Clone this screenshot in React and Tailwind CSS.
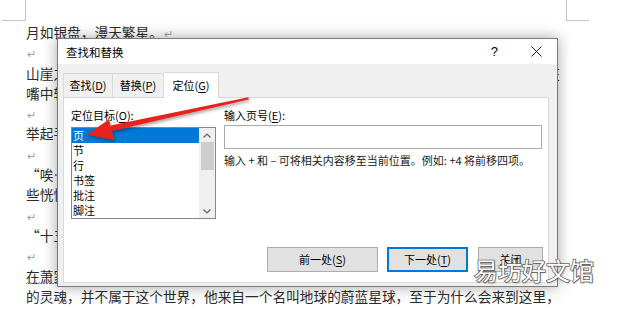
import React from 'react';

const Ret = () => <span className="ml-[1px] text-[11px] text-[#a0a0a0]">↵</span>;

const Line = ({ children }) => (
  <div className="h-[20.3px] whitespace-nowrap leading-[20.3px]">{children}</div>
);

const Key = ({ children }) => <span className="underline underline-offset-[2px]">{children}</span>;

const Chevron = ({ down }) => (
  <svg width="8" height="5" viewBox="0 0 8 5" className="block">
    <polyline
      points={down ? '0.5,0.5 4,4 7.5,0.5' : '0.5,4.5 4,1 7.5,4.5'}
      fill="none"
      stroke="#606060"
      strokeWidth="1.2"
    />
  </svg>
);

// spell-check squiggle under a word
const Squiggle = ({ children }) => (
  <span className="relative inline-block">
    {children}
    <svg className="absolute bottom-[1px] left-0" width="42" height="3" viewBox="0 0 42 3">
      <path
        d="M0 2 L1.5 0.5 L3 2 L4.5 0.5 L6 2 L7.5 0.5 L9 2 L10.5 0.5 L12 2 L13.5 0.5 L15 2 L16.5 0.5 L18 2 L19.5 0.5 L21 2 L22.5 0.5 L24 2 L25.5 0.5 L27 2 L28.5 0.5 L30 2 L31.5 0.5 L33 2 L34.5 0.5 L36 2 L37.5 0.5 L39 2 L40.5 0.5 L42 2"
        fill="none"
        stroke="#3b6fd8"
        strokeWidth="0.9"
      />
    </svg>
  </span>
);

const targets = ['页', '节', '行', '书签', '批注', '脚注'];

const Dialog = () => (
  <div className="absolute left-[57px] top-[38px] flex h-[249px] w-[501px] flex-col border border-[#7a7a7a] bg-[#f0f0f0] text-[11px] text-black shadow-[0_0_14px_rgba(0,0,0,0.35)]">
    {/* Title bar */}
    <div className="flex h-[25px] items-center bg-white pl-[8px]">
      <span className="text-[11.5px] leading-[16px]">查找和替换</span>
      <span className="ml-auto mr-[33px] text-[13px] leading-[16px] font-['Liberation_Sans',sans-serif]">?</span>
      <svg width="11" height="11" viewBox="0 0 11 11" className="mr-[15px]">
        <path d="M0.5 0.5 L10.5 10.5 M10.5 0.5 L0.5 10.5" stroke="#222" strokeWidth="1" />
      </svg>
    </div>

    <div className="pl-[5px] pr-[8px] pt-[8px]">
      {/* Tabs */}
      <div className="flex h-[25px] items-end">
        <div className="flex h-[24px] w-[50px] items-center justify-center border border-b-0 border-[#d9d9d9] bg-[#f0f0f0]">
          查找(<Key>D</Key>)
        </div>
        <div className="flex h-[24px] w-[51px] items-center justify-center border border-b-0 border-l-0 border-[#d9d9d9] bg-[#f0f0f0]">
          替换(<Key>P</Key>)
        </div>
        <div className="relative z-10 -mb-px flex h-[26px] w-[55px] items-center justify-center border border-b-0 border-l-0 border-[#d9d9d9] bg-white">
          定位(<Key>G</Key>)
        </div>
      </div>

      {/* Panel */}
      <div className="flex h-[186px] flex-col border border-[#d9d9d9] bg-white">
        <div className="flex pl-[7px] pt-[9px]">
          <div className="w-[145px]">
            <div className="h-[16px] leading-[16px]">
              定位目标(<Key>O</Key>):
            </div>
            <div className="mt-[4px] flex h-[92px] border border-[#828790]">
              <div className="flex-1">
                {targets.map((t, i) => (
                  <div
                    key={t}
                    className={`h-[15px] pl-[1px] leading-[15px] ${i === 0 ? 'bg-[#0078d7] text-white' : ''}`}
                  >
                    {t}
                  </div>
                ))}
              </div>
              <div className="flex w-[16px] flex-col items-center bg-[#f0f0f0]">
                <div className="flex h-[14px] items-center">
                  <Chevron />
                </div>
                <div className="h-[28px] w-[13px] bg-[#cdcdcd]" />
                <div className="mt-auto flex h-[14px] items-center">
                  <Chevron down />
                </div>
              </div>
            </div>
          </div>

          <div className="ml-[8px] w-[318px]">
            <div className="h-[16px] leading-[16px]">
              输入页号(<Key>E</Key>):
            </div>
            <div className="mt-[2px] h-[24px] border border-[#a9a9a9] bg-white" />
            <div className="mt-[3px] h-[16px] whitespace-nowrap leading-[16px] text-[#1a1a1a]">
              输入 + 和 – 可将相关内容移至当前位置。例如: +4 将前移四项。
            </div>
          </div>
        </div>

        {/* Buttons */}
        <div className="mt-auto flex justify-end gap-[9px] pb-[10px] pr-[5px]">
          <div className="flex h-[25px] w-[111px] items-center justify-center border border-[#adadad] bg-[#e1e1e1]">
            前一处(<Key>S</Key>)
          </div>
          <div className="flex h-[25px] w-[81px] items-center justify-center border-2 border-[#0078d7] bg-[#e1e1e1]">
            下一处(<Key>T</Key>)
          </div>
          <div className="ml-[1px] flex h-[25px] w-[65px] items-center justify-center border border-[#adadad] bg-[#e1e1e1]">
            关闭
          </div>
        </div>
      </div>
    </div>
  </div>
);

const Arrow = () => (
  <svg className="pointer-events-none absolute left-0 top-0" width="620" height="309" viewBox="0 0 620 309">
    <defs>
      <filter id="sh" x="-10%" y="-10%" width="120%" height="140%">
        <feDropShadow dx="1" dy="2" stdDeviation="1.5" floodColor="#000" floodOpacity="0.35" />
      </filter>
    </defs>
    <g filter="url(#sh)" fill="#e8231d">
      <polygon points="248.3,97.2 248.8,99.4 111.8,131 110.5,125.6" />
      <polygon points="87,134.5 109,119.5 114,140" />
    </g>
  </svg>
);

export default function App() {
  return (
    <div className="relative h-[309px] w-[620px] overflow-hidden bg-white font-['Noto_Sans_CJK_SC',sans-serif]">
      {/* page corner marks */}
      <div className="absolute left-[2px] top-0 h-[21px] w-[24px] border-b border-r border-[#c4c4c4]" />
      <div className="absolute left-[566px] top-0 h-[21px] w-[23px] border-b border-l border-[#c4c4c4]" />

      {/* document text */}
      <div className="pl-[26px] pt-[22px] text-[13.7px] text-[#2b2b2b]">
        <Line>月如银盘，漫天繁星。<Ret /></Line>
        <Line><Ret /></Line>
        <Line>山崖之上，一名清秀少年静静地盘膝而坐，抬头望着天上那轮皎洁的明月，少年的嘴角在</Line>
        <Line>嘴中轻轻哼着一首不知名的歌谣。<Ret /></Line>
        <Line><Ret /></Line>
        <Line>举起手中的酒壶，少年仰头灌下一大口酒，任凭辛辣的酒水顺着喉咙缓缓地流进腹中。<Ret /></Line>
        <Line><Ret /></Line>
        <Line>“唉…”少年轻轻地叹了一口气，目光中流露出一丝淡淡的忧伤，心中似乎也有有</Line>
        <Line>些恍惚。<Ret /></Line>
        <Line><Ret /></Line>
        <Line>“十五年了……”<Ret /></Line>
        <Line><Ret /></Line>
        <Line>
          <Squiggle>在萧家</Squiggle>
          这个偏远小镇生活了十五年的少年萧然，其实并不是这里的人，他体内藏着一个
        </Line>
        <Line>的灵魂，并不属于这个世界，他来自一个名叫地球的蔚蓝星球，至于为什么会来到这里，</Line>
      </div>

      <Dialog />
      <Arrow />

      {/* watermark */}
      <div className="absolute left-[474px] top-[255px] text-[24px] leading-[30px] text-white [-webkit-text-stroke:1.6px_#6a6a6a] [paint-order:stroke_fill] [text-shadow:1px_1px_2px_rgba(0,0,0,0.3)]">
        易坊好文馆
      </div>
    </div>
  );
}
